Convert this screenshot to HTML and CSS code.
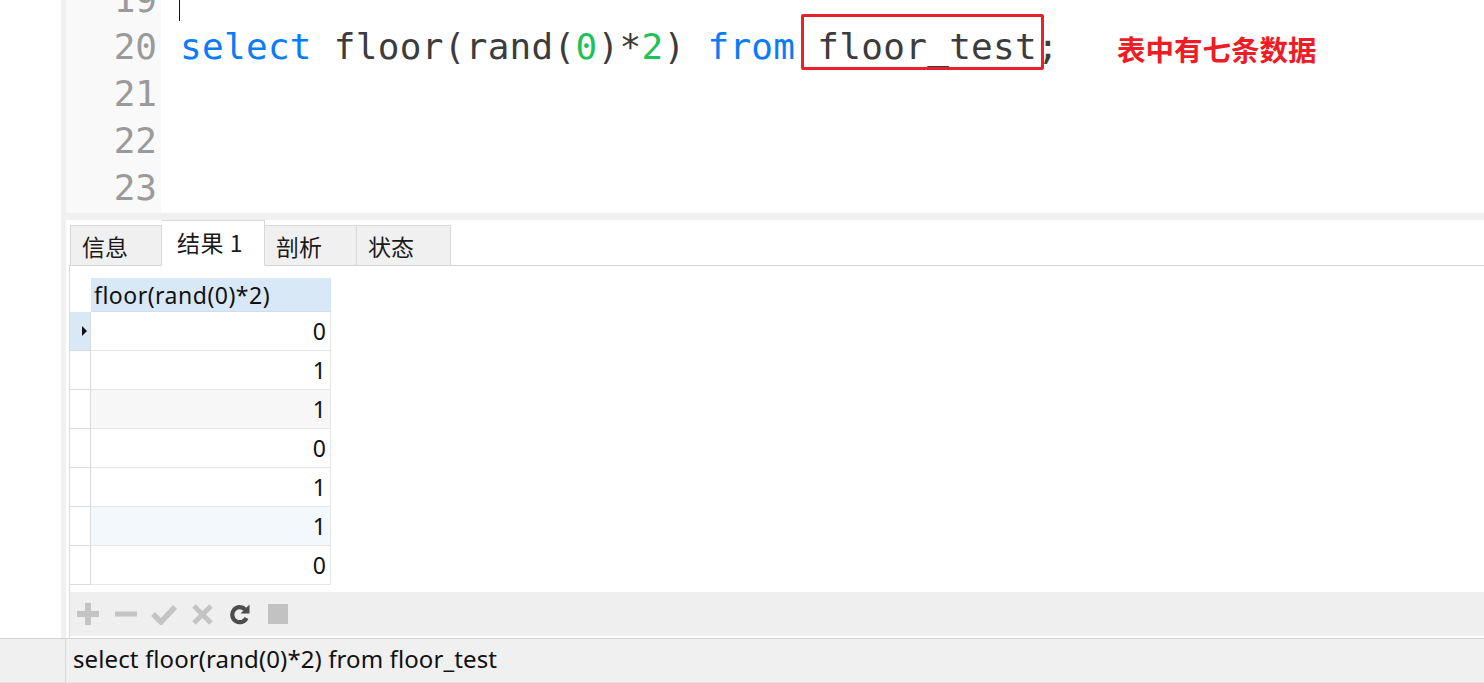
FILE: index.html
```html
<!DOCTYPE html>
<html lang="zh">
<head>
<meta charset="utf-8">
<title>Query</title>
<link rel="stylesheet" href="styles.css">
</head>
<body>
<div class="app">
  <div class="main">
    <div class="leftpad"></div>
    <div class="workspace">
      <div class="editor">
        <div class="gutter">
          <div class="ln">19</div>
          <div class="ln">20</div>
          <div class="ln">21</div>
          <div class="ln">22</div>
          <div class="ln">23</div>
        </div>
        <div class="code">
          <div class="line"><span class="cursor"></span></div>
          <div class="line"><span class="kw">select</span> floor(rand(<span class="num">0</span>)*<span class="num">2</span>) <span class="kw">from</span> <span class="boxed">floor_test</span>;<span class="note">表中有七条数据</span></div>
          <div class="line"></div>
          <div class="line"></div>
          <div class="line"></div>
        </div>
      </div>
      <div class="divider"></div>
      <div class="results">
        <div class="tabs">
          <div class="tab">信息</div>
          <div class="tab active">结果 1</div>
          <div class="tab">剖析</div>
          <div class="tab wide">状态</div>
        </div>
        <div class="panel">
          <div class="grid">
            <div class="ind head"></div><div class="cell head">floor(rand(0)*2)</div>
            <div class="ind current"><span class="tri"></span></div><div class="cell">0</div>
            <div class="ind"></div><div class="cell">1</div>
            <div class="ind"></div><div class="cell alt">1</div>
            <div class="ind"></div><div class="cell">0</div>
            <div class="ind"></div><div class="cell">1</div>
            <div class="ind"></div><div class="cell hover">1</div>
            <div class="ind"></div><div class="cell">0</div>
          </div>
          <div class="toolbar">
            <svg class="ico" width="22" height="22" viewBox="0 0 22 22"><path d="M8 0h6v8h8v6h-8v8H8v-8H0V8h8z" fill="#c4c4c4"/></svg>
            <svg class="ico" width="22" height="22" viewBox="0 0 22 22"><rect x="0" y="8.5" width="22" height="5" fill="#c4c4c4"/></svg>
            <svg class="ico" width="26" height="22" viewBox="0 0 26 22"><path d="M2 11l8 8L24 4" fill="none" stroke="#c4c4c4" stroke-width="5.5"/></svg>
            <svg class="ico" width="21" height="22" viewBox="0 0 21 22"><path d="M2 3l17 17M19 3L2 20" fill="none" stroke="#c4c4c4" stroke-width="5"/></svg>
            <svg class="ico" width="21" height="22" viewBox="0 0 21 22"><path d="M16.2 6.5A7.5 7.5 0 1 0 17.5 15" fill="none" stroke="#4d4d4d" stroke-width="4.2"/><path d="M20.5 1.5v9h-9z" fill="#4d4d4d"/></svg>
            <svg class="ico" width="20" height="20" viewBox="0 0 20 20"><rect width="20" height="20" fill="#c2c2c2"/></svg>
          </div>
        </div>
      </div>
    </div>
  </div>
  <div class="status">
    <div class="status-left"></div>
    <div class="status-text">select floor(rand(0)*2) from floor_test</div>
  </div>
</div>
</body>
</html>
```
FILE: styles.css
```css
html, body {
  margin: 0;
  padding: 0;
  background: #ffffff;
}
body {
  width: 1484px;
  height: 683px;
  overflow: hidden;
  font-family: "Noto Sans", "Noto Sans CJK SC", sans-serif;
}
.app {
  display: flex;
  flex-direction: column;
  height: 683px;
}
.main {
  display: flex;
  height: 638px;
}
.leftpad {
  width: 61px;
  background: #ffffff;
}
.workspace {
  flex: 1;
  display: flex;
  flex-direction: column;
  border-left: 5px solid #f0f0f0;
  min-width: 0;
}
.editor {
  height: 213px;
  flex: none;
  display: flex;
  overflow: hidden;
  background: #ffffff;
}
.gutter {
  width: 95px;
  background: #f9f9f9;
  margin-top: -24px;
  padding-bottom: 24px;
}
.ln {
  height: 47px;
  line-height: 47px;
  text-align: right;
  padding-right: 4px;
  font-family: "DejaVu Sans Mono", monospace;
  font-size: 36px;
  color: #9a9a9a;
}
.code {
  flex: 1;
  margin-top: -24px;
  padding-left: 19px;
  font-family: "DejaVu Sans Mono", monospace;
  font-size: 36px;
  color: #3c3c3c;
}
.line {
  height: 47px;
  line-height: 47px;
  white-space: pre;
  letter-spacing: 0.3px;
}
.cursor {
  display: inline-block;
  width: 1px;
  height: 45px;
  background: #111;
  vertical-align: top;
  margin-left: -1px;
}
.kw { color: #0a7cf8; }
.num { color: #1ec15a; }
.boxed {
  display: inline-block;
  position: relative;
  line-height: 47px;
  vertical-align: top;
}
.boxed::after {
  content: "";
  position: absolute;
  left: -16px;
  right: -7px;
  top: -9px;
  bottom: 0;
  border: 3px solid #e8222b;
  border-radius: 2px;
}
.note {
  font-family: "Noto Sans CJK SC", sans-serif;
  font-weight: 700;
  font-size: 28.5px;
  letter-spacing: 0;
  color: #ee1c25;
  margin-left: 58px;
  vertical-align: -2px;
}
.divider {
  height: 7px;
  flex: none;
  background: #f0f0f0;
}
.results {
  flex: 1;
  display: flex;
  flex-direction: column;
  padding-left: 3px;
  background: #ffffff;
}
.tabs {
  display: flex;
  align-items: flex-end;
  height: 46px;
  flex: none;
  padding-left: 1px;
  border-bottom: 1px solid #d6d6d6;
  box-sizing: border-box;
}
.tab {
  box-sizing: border-box;
  width: 92px;
  height: 41px;
  margin-bottom: -1px;
  padding-left: 11px;
  background: #f0f0f0;
  border: 1px solid #d9d9d9;
  border-bottom: 1px solid #d6d6d6;
  font-family: "Noto Sans CJK SC", sans-serif;
  font-size: 23px;
  line-height: 41px;
  color: #1a1a1a;
}
.tab + .tab { border-left: none; }
.tab.wide { width: 94px; }
.tab.active {
  width: 103px;
  height: 46px;
  padding-left: 15px;
  background: #ffffff;
  border-bottom-color: #ffffff;
  line-height: 42px;
  border-right: 1px solid #d9d9d9;
  letter-spacing: 0.5px;
}
.panel {
  flex: 1;
  border-left: 1px solid #dcdcdc;
  display: flex;
  flex-direction: column;
  padding-top: 12px;
  padding-bottom: 2px;
}
.grid {
  display: grid;
  grid-template-columns: 21px 240px;
  grid-template-rows: 34px;
  grid-auto-rows: 39px;
}
.grid > div { box-sizing: border-box; }
.ind {
  border-right: 1px solid #dadada;
  border-bottom: 1px solid #dadada;
  display: flex;
  align-items: center;
  padding-left: 12px;
}
.ind.head {
  border: none;
}
.ind.current { background: #d9e8f6; }
.tri {
  width: 0;
  height: 0;
  border-top: 5px solid transparent;
  border-bottom: 5px solid transparent;
  border-left: 5px solid #111;
}
.cell {
  border-right: 1px solid #e6e6e6;
  border-bottom: 1px solid #e6e6e6;
  text-align: right;
  padding-right: 4px;
  font-size: 23px;
  line-height: 38px;
  color: #111;
}
.cell.head {
  background: #d9e8f6;
  text-align: left;
  padding-left: 3px;
  font-size: 23px;
  line-height: 34px;
  letter-spacing: 0.5px;
  border-bottom: 1px solid #cfdfee;
  border-right: none;
}
.cell.alt { background: #f7f7f7; }
.cell.hover { background: #f3f8fd; }
.toolbar {
  margin-top: 7px;
  height: 44px;
  flex: none;
  background: #efefef;
  display: flex;
  align-items: center;
  padding-left: 7px;
}
.ico { display: block; margin-right: 16px; }
.ico:nth-child(2) { margin-right: 14px; }
.ico:nth-child(3) { margin-right: 15px; }
.ico:nth-child(5) { margin-right: 18px; }
.status {
  height: 45px;
  flex: none;
  display: flex;
  background: #f0f0f0;
  border-top: 1px solid #d3d3d3;
  box-sizing: border-box;
  border-bottom: 1px solid #e9e2da;
}
.status-left {
  width: 65px;
  border-right: 1px solid #d6d6d6;
}
.status-text {
  padding-left: 7px;
  font-size: 24px;
  letter-spacing: 0.1px;
  line-height: 40px;
  color: #111;
}
```
